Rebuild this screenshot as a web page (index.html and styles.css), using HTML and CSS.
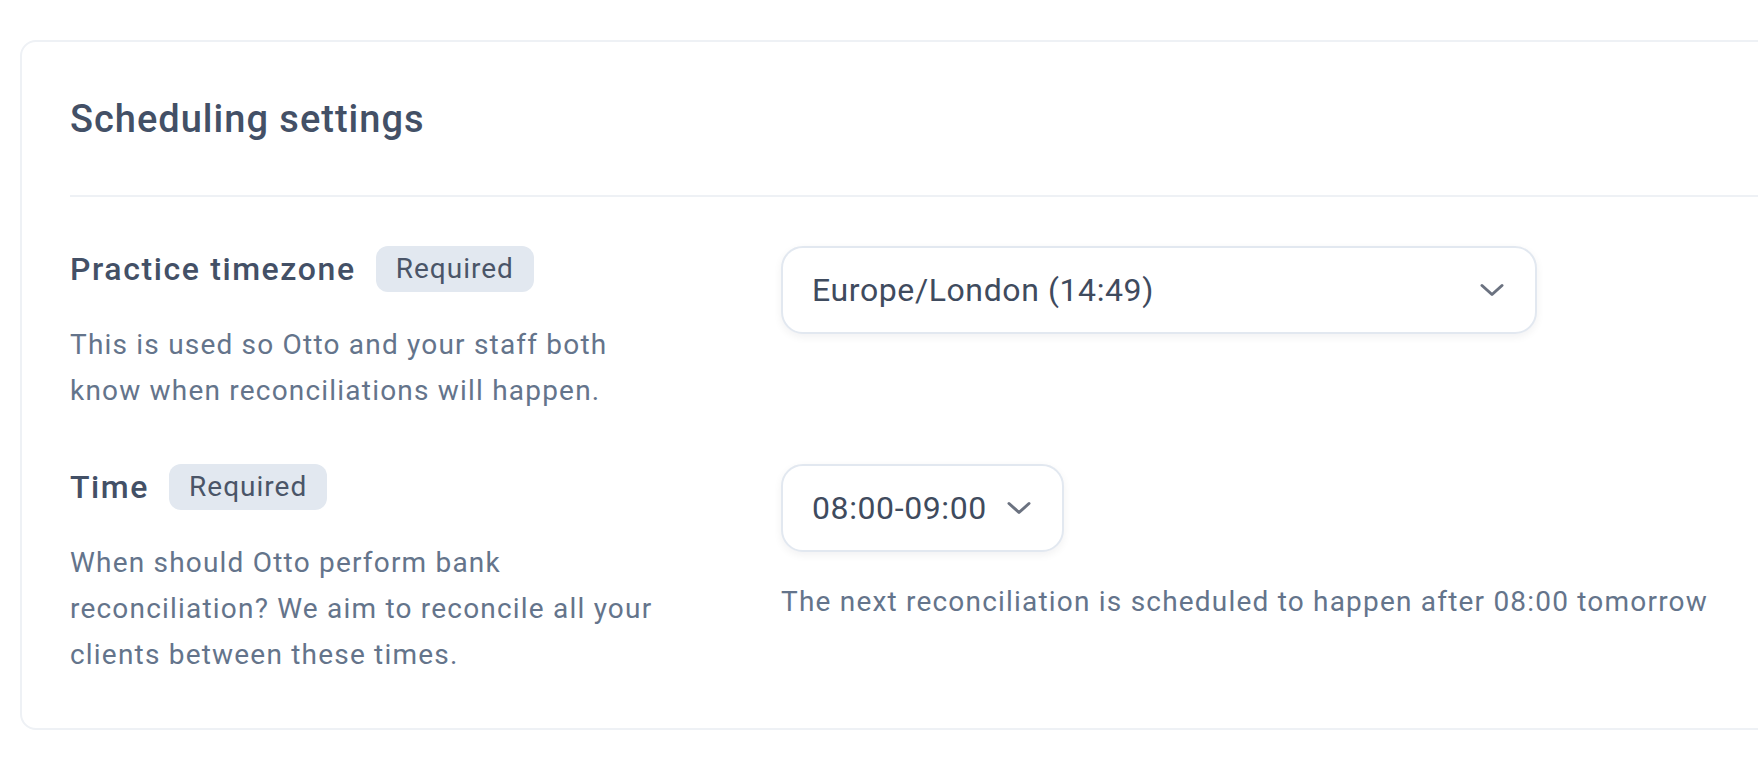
FILE: index.html
```html
<!DOCTYPE html>
<html lang="en">
<head>
<meta charset="utf-8">
<title>Scheduling settings</title>
<link rel="stylesheet" href="styles.css">
</head>
<body>
<div class="page">
  <section class="card">
    <header class="card-header">
      <h2 class="card-title">Scheduling settings</h2>
    </header>
    <div class="card-body">
      <div class="field">
        <div class="field-info">
          <div class="label-row">
            <span class="label">Practice timezone</span>
            <span class="badge">Required</span>
          </div>
          <p class="desc">This is used so Otto and your staff both know when reconciliations will happen.</p>
        </div>
        <div class="field-control">
          <div class="select select-wide">
            <span class="select-value">Europe/London (14:49)</span>
            <svg class="chevron" viewBox="0 0 24 14" width="24" height="14" aria-hidden="true"><path d="M2 2.5 L12 11.5 L22 2.5" fill="none" stroke="currentColor" stroke-width="3" stroke-linecap="round" stroke-linejoin="round"/></svg>
          </div>
        </div>
      </div>
      <div class="field">
        <div class="field-info">
          <div class="label-row">
            <span class="label">Time</span>
            <span class="badge">Required</span>
          </div>
          <p class="desc">When should Otto perform bank reconciliation? We aim to reconcile all your clients between these times.</p>
        </div>
        <div class="field-control">
          <div class="select">
            <span class="select-value">08:00-09:00</span>
            <svg class="chevron" viewBox="0 0 24 14" width="24" height="14" aria-hidden="true"><path d="M2 2.5 L12 11.5 L22 2.5" fill="none" stroke="currentColor" stroke-width="3" stroke-linecap="round" stroke-linejoin="round"/></svg>
          </div>
          <p class="hint">The next reconciliation is scheduled to happen after 08:00 tomorrow</p>
        </div>
      </div>
    </div>
  </section>
</div>
</body>
</html>
```

FILE: styles.css
```css
* {
  box-sizing: border-box;
}

html, body {
  margin: 0;
  padding: 0;
  background: #ffffff;
  overflow: hidden;
}

body {
  font-family: Roboto, "Noto Sans", "Liberation Sans", sans-serif;
  width: 1758px;
  height: 758px;
}

.page {
  padding: 40px 0 0 20px;
}

.card {
  width: 1800px;
  background: #ffffff;
  border: 2px solid #eef1f5;
  border-radius: 16px;
  padding: 0 0 0 48px;
}

.card-header {
  padding: 53px 0 52px 0;
  border-bottom: 2px solid #eef1f5;
}

.card-title {
  margin: 0;
  font-size: 38px;
  line-height: 48px;
  font-weight: 500;
  letter-spacing: 1px;
  color: #435066;
}

.card-body {
  padding: 49px 0 50px 0;
  display: flex;
  flex-direction: column;
  gap: 50px;
}

.field {
  display: grid;
  grid-template-columns: 711px 1fr;
  align-items: start;
}

.label-row {
  display: flex;
  align-items: center;
  gap: 20px;
  height: 46px;
}

.label {
  font-size: 32px;
  line-height: 46px;
  font-weight: 500;
  letter-spacing: 1.6px;
  color: #435066;
}

.badge {
  display: inline-block;
  height: 46px;
  padding: 0 20px;
  border-radius: 12px;
  background: #e2e8f0;
  color: #4a5568;
  font-size: 28px;
  line-height: 46px;
  letter-spacing: 1px;
}

.desc {
  margin: 30px 0 0 0;
  max-width: 600px;
  font-size: 28px;
  line-height: 46px;
  letter-spacing: 1.2px;
  color: #64748b;
}

.field-control {
  display: flex;
  flex-direction: column;
  align-items: flex-start;
}

.select {
  display: inline-flex;
  align-items: center;
  gap: 20px;
  height: 88px;
  padding: 0 31px 0 29px;
  background: #ffffff;
  border: 2px solid #e2e8f0;
  border-radius: 22px;
  box-shadow: 0 3px 8px rgba(15, 23, 42, 0.06);
}

.select-wide {
  width: 756px;
  justify-content: space-between;
}

.select-value {
  font-size: 32px;
  line-height: 40px;
  letter-spacing: 0.6px;
  color: #3f4b5e;
}

.chevron {
  display: block;
  color: #6b7280;
  flex: none;
}

.hint {
  margin: 27px 0 0 0;
  font-size: 28px;
  line-height: 46px;
  letter-spacing: 1.2px;
  color: #64748b;
  white-space: nowrap;
}
```
